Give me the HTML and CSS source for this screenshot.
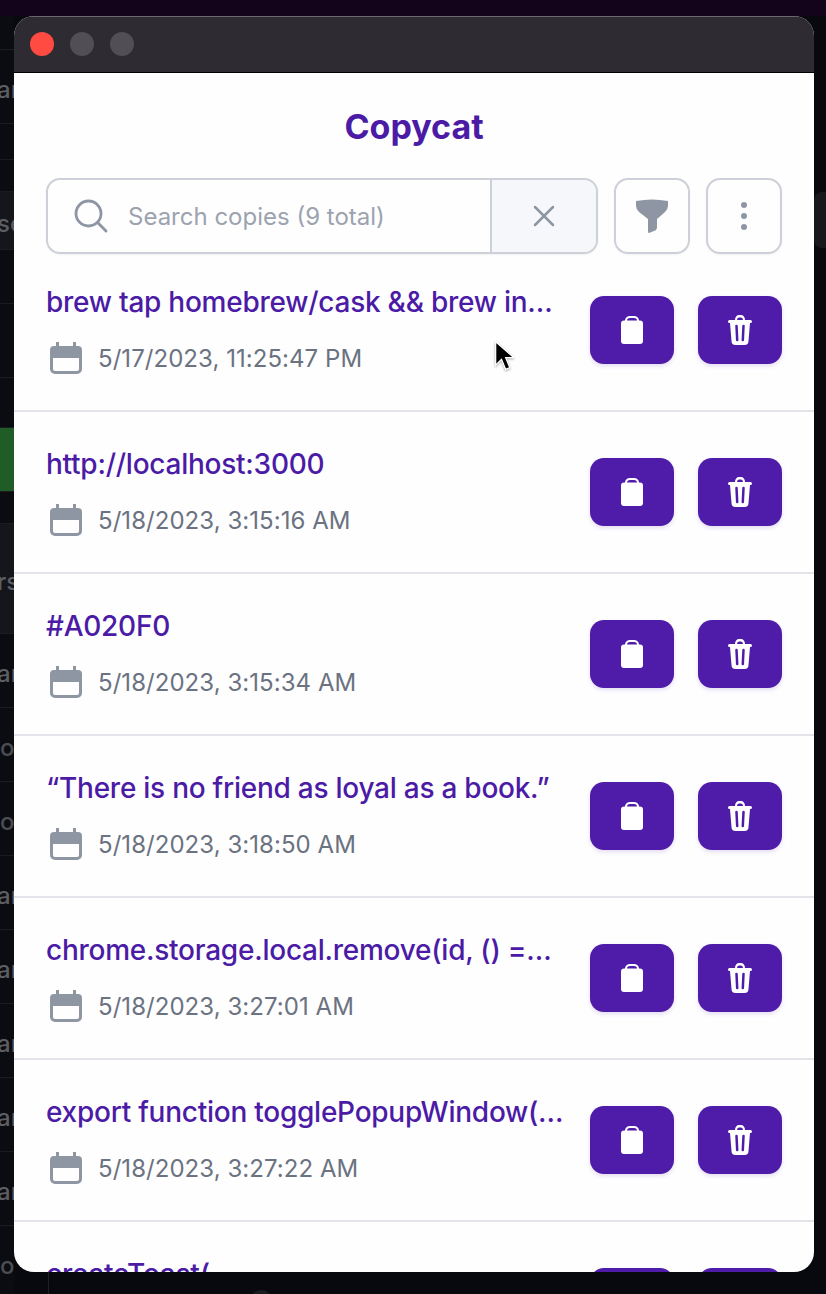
FILE: index.html
```html
<!DOCTYPE html>
<html>
<head>
  <title>Copycat</title>
  <link rel="stylesheet" href="styles.css">
</head>
<body>
  <!--dim page behind the popup-->
  <div class="backdrop">
    <div class="topGlow"></div>
    <div class="sliver">
      <div class="sliverRow" style="height: 34px"></div>
      <div class="sliverRow" style="height: 74px"><span>ar</span></div>
      <div class="sliverRow" style="height: 36px"></div>
      <div class="sliverRow" style="height: 32px"></div>
      <div class="sliverRow lighter" style="height: 58px"><span>se</span></div>
      <div class="sliverRow" style="height: 54px"></div>
      <div class="sliverRow" style="height: 74px"></div>
      <div class="sliverRow" style="height: 50px"></div>
      <div class="sliverRow green" style="height: 64px"></div>
      <div class="sliverRow" style="height: 32px"></div>
      <div class="sliverRow lighter" style="height: 110px"><span>rs</span></div>
      <div class="sliverRow" style="height: 74px"><span>ar</span></div>
      <div class="sliverRow" style="height: 74px"><span class="round">o</span></div>
      <div class="sliverRow" style="height: 74px"><span class="round">o</span></div>
      <div class="sliverRow" style="height: 74px"><span>ar</span></div>
      <div class="sliverRow" style="height: 74px"><span>ar</span></div>
      <div class="sliverRow" style="height: 74px"><span>ar</span></div>
      <div class="sliverRow" style="height: 74px"><span>ar</span></div>
      <div class="sliverRow" style="height: 74px"><span>ar</span></div>
      <div class="sliverRow" style="height: 74px"><span class="round">o</span></div>
    </div>
    <div class="rightPill"></div>
    <div class="bottomLine"></div>
    <div class="bottomDot"></div>
  </div>

  <div class="window">
    <div class="titlebar">
      <span class="light red"></span>
      <span class="light"></span>
      <span class="light"></span>
    </div>

    <div class="popup">
      <h1 class="brand">Copycat</h1>

      <!--search-->
      <div class="toolbar">
        <div class="searchBox">
          <div class="searchField">
            <svg class="searchIcon" viewBox="0 0 24 24"><path d="M21 21l-5.197-5.197m0 0A7.5 7.5 0 105.196 5.196a7.5 7.5 0 0010.607 10.607z"/></svg>
            <span class="placeholder">Search copies (9 total)</span>
          </div>
          <div class="clearButton">
            <svg class="clearIcon" viewBox="0 0 24 24"><path d="M6 18L18 6M6 6l12 12"/></svg>
          </div>
        </div>
        <div class="toolButton">
          <svg class="funnelIcon" viewBox="0 0 32 36"><path d="M0 3Q16 0 32 3V8Q32 11 29 14L21 21V29Q21 32 18 33L13 35Q12 35.500 12 33V21L3 14Q0 11 0 8Z"/></svg>
        </div>
        <div class="toolButton">
          <svg class="dotsIcon" viewBox="0 0 6 28"><circle cx="3" cy="3" r="3"/><circle cx="3" cy="14" r="3"/><circle cx="3" cy="25" r="3"/></svg>
        </div>
      </div>

      <!--copies-->
      <div class="copyList" id="copyList"></div>
    </div>
  </div>

  <svg class="cursor" viewBox="0 0 24 38"><path d="M2 2V30L9 23L14 35L19 33L14 21H24Z"/></svg>

  <script>
    var copies = [
      ['brew tap homebrew/cask && brew install --cask visual-studio-code', '5/17/2023, 11:25:47 PM'],
      ['http://localhost:3000', '5/18/2023, 3:15:16 AM'],
      ['#A020F0', '5/18/2023, 3:15:34 AM'],
      ['“There is no friend as loyal as a book.”', '5/18/2023, 3:18:50 AM'],
      ['chrome.storage.local.remove(id, () => { refreshCopies(); });', '5/18/2023, 3:27:01 AM'],
      ['export function togglePopupWindow(open) { return open; }', '5/18/2023, 3:27:22 AM'],
      ['createToast(', '5/18/2023, 3:28:02 AM']
    ];
    var calendar = '<svg class="calendarIcon" viewBox="0 0 32 32"><path class="calendarTop" d="M6 0h3v4h14V0h3v4h2a4 4 0 014 4v8H0V8a4 4 0 014-4h2z"/><path class="calendarBody" d="M1.500 14V27a3.500 3.500 0 003.500 3.500H27a3.500 3.500 0 003.500-3.500V14"/></svg>';
    var clipboard = '<svg class="clipIcon" viewBox="0 0 22 28"><path class="fill" d="M4 4.500A5 4.500 0 019 0h4a5 4.500 0 015 4.500h1a3 3 0 013 3V25a3 3 0 01-3 3H3a3 3 0 01-3-3V7.500a3 3 0 013-3z"/><path class="hole" d="M6 4.500A3 2.500 0 019 2h4a3 2.500 0 013 2.500z"/></svg>';
    var trash = '<svg class="trashIcon" viewBox="0 0 24 30"><path class="fill" d="M7 5A4 5 0 0111 0h2a4 5 0 014 5h5.500a1.500 1.500 0 010 3H22L20.500 26a4 4 0 01-4 4h-9a4 4 0 01-4-4L2 8H1.500a1.500 1.500 0 010-3z"/><path class="hole" d="M9 5A2 2.500 0 0111 2.500h2A2 2.500 0 0115 5z"/><path class="slot" d="M8.500 11L9.200 25M15.500 11L14.800 25"/></svg>';
    var list = document.getElementById('copyList');
    for (var i = 0; i < copies.length; i++) {
      var row = document.createElement('div');
      row.className = 'copyRow';
      row.innerHTML =
        '<div class="copyInfo">' +
          '<div class="copyText"></div>' +
          '<div class="copyDate">' + calendar + '<span>' + copies[i][1] + '</span></div>' +
        '</div>' +
        '<div class="actionButton">' + clipboard + '</div>' +
        '<div class="actionButton">' + trash + '</div>';
      row.querySelector('.copyText').textContent = copies[i][0];
      list.appendChild(row);
    }
  </script>
</body>
</html>
```

FILE: styles.css
```css
html, body {
  height: 100%;
  margin: 0;
  padding: 0;
  overflow: hidden;
  background-color: #08090e;
  font-family: "Inter", "Liberation Sans", sans-serif;
}
body {
  padding: 16px 12px 0 14px;
  box-sizing: border-box;
}
.backdrop {
  position: absolute;
  top: 0;
  left: 0;
  width: 826px;
  height: 1294px;
  overflow: hidden;
}
.topGlow {
  height: 16px;
  background-color: #13041c;
}
.sliver {
  position: absolute;
  top: 16px;
  left: 0;
  width: 14px;
  overflow: hidden;
}
.sliverRow {
  box-sizing: border-box;
  display: flex;
  align-items: center;
  border-bottom: 1px solid #1b1c21;
  background-color: #0b0c11;
  overflow: hidden;
}
.sliverRow span {
  margin-left: -3px;
  padding-top: 6px;
  font-size: 24px;
  font-weight: 500;
  color: #5c5e63;
  white-space: nowrap;
}
.sliverRow .round {
  margin-left: 0;
  color: #4b4d52;
}
.lighter {
  background-color: #15161b;
}
.green {
  background-color: #1f5c26;
}
.rightPill {
  position: absolute;
  top: 192px;
  left: 814px;
  width: 24px;
  height: 56px;
  border-radius: 8px;
  background-color: #17181d;
}
.bottomLine {
  position: absolute;
  top: 1272px;
  left: 48px;
  width: 1px;
  height: 22px;
  background-color: #1f2025;
}
.bottomDot {
  position: absolute;
  top: 1290px;
  left: 250px;
  width: 22px;
  height: 22px;
  border-radius: 50%;
  background-color: #1a1b20;
}

.window {
  position: relative;
  width: 800px;
  height: 1256px;
  display: flex;
  flex-direction: column;
  border-radius: 20px;
  overflow: hidden;
  background-color: #fefeff;
}
.titlebar {
  box-sizing: border-box;
  height: 57px;
  flex-shrink: 0;
  display: flex;
  align-items: center;
  gap: 16px;
  padding: 0 0 2px 16px;
  background-color: #2e2b32;
  border-top: 1px solid #6a686d;
  border-bottom: 1px solid #000;
}
.light {
  width: 24px;
  height: 24px;
  border-radius: 50%;
  background-color: #514e55;
}
.red {
  background-color: #ff4b41;
}

.popup {
  flex: 1;
  min-height: 0;
  display: flex;
  flex-direction: column;
}
.brand {
  margin: 34px 0 31px;
  font-size: 34px;
  line-height: 40px;
  font-weight: 700;
  text-align: center;
  color: #4b1ba6;
}
.toolbar {
  position: relative;
  z-index: 1;
  display: flex;
  gap: 16px;
  padding: 0 32px;
}
.searchBox {
  box-sizing: border-box;
  width: 552px;
  height: 76px;
  display: flex;
  border: 2px solid #cdd0d8;
  border-radius: 14px;
  overflow: hidden;
  box-shadow: 0 1px 2px rgba(0, 0, 0, 0.05);
}
.searchField {
  flex: 1;
  display: flex;
  align-items: center;
  gap: 17px;
  padding-left: 23px;
}
.searchIcon {
  width: 40px;
  height: 40px;
  fill: none;
  stroke: #8f96a3;
  stroke-width: 1.7;
  stroke-linecap: round;
}
.placeholder {
  font-size: 24px;
  color: #9ca3af;
}
.clearButton {
  width: 104px;
  display: flex;
  align-items: center;
  justify-content: center;
  background-color: #f6f7fb;
  border-left: 2px solid #cdd0d8;
}
.clearIcon {
  width: 36px;
  height: 36px;
  fill: none;
  stroke: #8f96a3;
  stroke-width: 1.7;
  stroke-linecap: round;
}
.toolButton {
  box-sizing: border-box;
  width: 76px;
  height: 76px;
  display: flex;
  align-items: center;
  justify-content: center;
  border: 2px solid #cdd0d8;
  border-radius: 14px;
  box-shadow: 0 1px 2px rgba(0, 0, 0, 0.05);
}
.funnelIcon {
  width: 32px;
  height: 36px;
  fill: #8f96a3;
}
.dotsIcon {
  width: 6px;
  height: 28px;
  fill: #8f96a3;
}

.copyList {
  flex: 1;
  min-height: 0;
  margin-top: -4px;
  overflow: hidden;
}
.copyRow {
  box-sizing: border-box;
  height: 162px;
  display: flex;
  align-items: center;
  gap: 24px;
  padding: 0 32px;
  border-bottom: 2px solid #e3e4ea;
}
.copyInfo {
  flex: 1;
  min-width: 0;
  display: flex;
  flex-direction: column;
  gap: 20px;
}
.copyText {
  font-size: 28px;
  line-height: 36px;
  font-weight: 550;
  letter-spacing: -0.25px;
  color: #4b1ba6;
  white-space: nowrap;
  overflow: hidden;
  text-overflow: ellipsis;
}
.copyDate {
  display: flex;
  align-items: center;
  gap: 16px;
  padding-left: 4px;
  height: 36px;
  font-size: 24px;
  letter-spacing: 0.05px;
  color: #6b7280;
}
.calendarIcon {
  width: 32px;
  height: 32px;
}
.calendarTop {
  fill: #8f96a3;
}
.calendarBody {
  fill: none;
  stroke: #8f96a3;
  stroke-width: 3;
}
.actionButton {
  width: 84px;
  height: 68px;
  flex-shrink: 0;
  display: flex;
  align-items: center;
  justify-content: center;
  border-radius: 14px;
  background-color: #4e1ca8;
  box-shadow: 0 2px 4px rgba(76, 28, 163, 0.15);
}
.clipIcon {
  width: 22px;
  height: 28px;
}
.trashIcon {
  width: 24px;
  height: 30px;
}
.fill {
  fill: #fff;
}
.hole {
  fill: #4e1ca8;
}
.slot {
  fill: none;
  stroke: #4e1ca8;
  stroke-width: 2.500;
  stroke-linecap: round;
}

.cursor {
  position: absolute;
  top: 340px;
  left: 494px;
  width: 20px;
  height: 32px;
  fill: #000;
  stroke: #fff;
  stroke-width: 1.500;
  filter: drop-shadow(0 1px 1px rgba(0, 0, 0, 0.35));
}
```
